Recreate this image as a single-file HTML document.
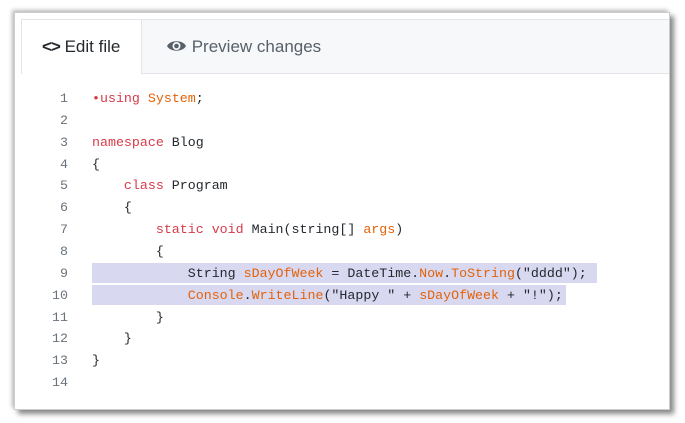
<!DOCTYPE html>
<html><head><style>
body{margin:0;width:685px;height:423px;background:#fff;position:relative;overflow:hidden;font-family:"Liberation Sans",sans-serif}
.frame{position:absolute;left:14px;top:12px;width:654px;height:396px;background:#fff;border:1px solid #ccc;box-shadow:4px 4px 5px #888, -2px -2px 4px #bbb}
.tabs{position:absolute;left:6px;top:6px;right:0;height:53px;background:#f6f8fa;border-top:1px solid #e1e4e8;border-bottom:1px solid #e1e4e8}
.tab1{position:absolute;left:0;top:0;width:121px;height:54px;background:#fff;border-left:1px solid #e1e4e8;border-right:1px solid #e1e4e8;box-sizing:border-box}
.t{position:absolute;top:17px;font-size:17px;color:#24292e}
.t2{color:#586069}
.code{position:absolute;left:0;top:75px;font-family:"Liberation Mono",monospace;font-size:13.3px;color:#24292e}
.ln{position:absolute;height:21.85px;line-height:21.85px;white-space:pre}
.n{left:31px;width:22px;text-align:right;color:#6a737d}
.c{left:77px}
.k{color:#d73a49}.o{color:#e36209}
.hl{position:absolute;left:77px;height:20px;background:#d8d8f0}
</style></head><body>
<div class="frame">
<div class="tabs">
<div class="tab1"></div>
<div class="t" style="left:21px"><b style="font-weight:bold;letter-spacing:-1px">&lt;&gt;</b> Edit file</div>
<div class="t t2" style="left:145px"><svg width="21" height="16" viewBox="0 0 20 14" style="vertical-align:-2px"><path d="M1 7C4 1 16 1 19 7C16 13 4 13 1 7Z" fill="#586069"/><circle cx="10" cy="7" r="3.8" fill="#f6f8fa"/><circle cx="10" cy="7" r="2.2" fill="#586069"/></svg> Preview changes</div>
</div>
<div class="code">
<div class="hl" style="top:175px;width:505px"></div>
<div class="hl" style="top:197px;width:474px"></div>
<div class="ln n" style="top:0">1</div><div class="ln c" style="top:0"><span class="k">•using</span> <span class="o">System</span>;</div>
<div class="ln n" style="top:21.85px">2</div>
<div class="ln n" style="top:43.7px">3</div><div class="ln c" style="top:43.7px"><span class="k">namespace</span> Blog</div>
<div class="ln n" style="top:65.55px">4</div><div class="ln c" style="top:65.55px">{</div>
<div class="ln n" style="top:87.4px">5</div><div class="ln c" style="top:87.4px">    <span class="k">class</span> Program</div>
<div class="ln n" style="top:109.25px">6</div><div class="ln c" style="top:109.25px">    {</div>
<div class="ln n" style="top:131.1px">7</div><div class="ln c" style="top:131.1px">        <span class="k">static void</span> Main(string[] <span class="o">args</span>)</div>
<div class="ln n" style="top:152.95px">8</div><div class="ln c" style="top:152.95px">        {</div>
<div class="ln n" style="top:174.8px">9</div><div class="ln c" style="top:174.8px">            String <span class="o">sDayOfWeek</span> = DateTime.<span class="o">Now</span>.<span class="o">ToString</span>("dddd");</div>
<div class="ln n" style="top:196.65px">10</div><div class="ln c" style="top:196.65px">            <span class="o">Console</span>.<span class="o">WriteLine</span>("Happy " + <span class="o">sDayOfWeek</span> + "!");</div>
<div class="ln n" style="top:218.5px">11</div><div class="ln c" style="top:218.5px">        }</div>
<div class="ln n" style="top:240.35px">12</div><div class="ln c" style="top:240.35px">    }</div>
<div class="ln n" style="top:262.2px">13</div><div class="ln c" style="top:262.2px">}</div>
<div class="ln n" style="top:284.05px">14</div>
</div>
</div>
</body></html>
